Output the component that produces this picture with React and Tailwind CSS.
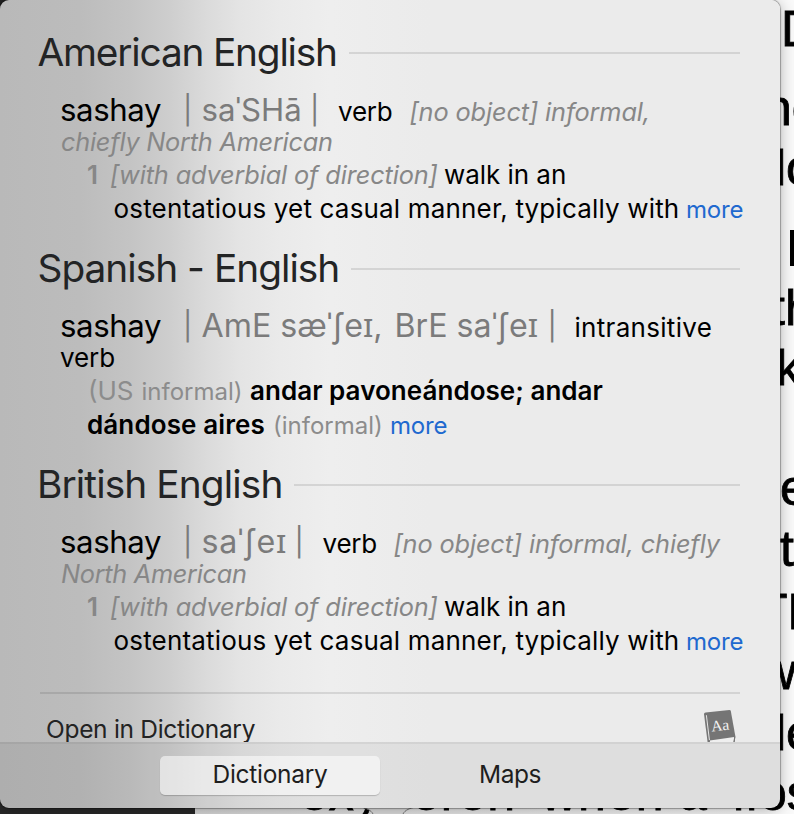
const ital = "shrink-0 whitespace-pre text-[25.3px] italic text-[#878787]";
const body = "shrink-0 whitespace-pre text-[26px] text-black";
const phon = "shrink-0 whitespace-pre text-[#7b7b7b]";
const bar = "shrink-0 relative bottom-px right-px whitespace-pre text-[28px] text-[#7b7b7b]";
const more = "shrink-0 whitespace-pre text-[24px] tracking-[-0.2px] text-[#1f69cf]";

function Heading({ width, children }) {
  return (
    <h2 className="flex h-[50px] items-center text-[38.8px] leading-[50px] text-[#232425]">
      <span className={`shrink-0 whitespace-pre ${width}`}>{children}</span>
      <span className="mt-[2px] mr-[40px] h-[2px] flex-1 bg-black/10" />
    </h2>
  );
}

function Line({ className, children }) {
  return <div className={`flex items-baseline ${className}`}>{children}</div>;
}

function Headword() {
  return (
    <>
      <span className="w-[124px] shrink-0 text-[31.2px] tracking-[-0.39px] text-black">sashay</span>
      <span className={`w-[17.5px] ${bar}`}>|</span>
    </>
  );
}

function Sense() {
  return (
    <>
      <Line className="h-[33px] pl-[87px] leading-[33px]">
        <span className="w-[23px] shrink-0 text-[26px] font-semibold text-[#878787]">1</span>
        <span className={`w-[334px] tracking-[-0.136px] ${ital}`}>[with adverbial of direction]</span>
        <span className={`tracking-[-0.05px] ${body}`}>walk in an</span>
      </Line>
      <Line className="h-[34px] pl-[113.5px] leading-[35px]">
        <span className={`w-[572.5px] tracking-[0.17px] ${body}`}>ostentatious yet casual manner, typically with</span>
        <a className={more}>more</a>
      </Line>
    </>
  );
}

/* Page text that shows past the popover's edges. */
const pageText = [
  ["D", "left-[781px] top-[4px]"],
  ["ne", "left-[764px] top-[83px]"],
  ["lo", "left-[775px] top-[143px]"],
  ["th", "left-[771px] top-[283px]"],
  ["k", "left-[776px] top-[343px]"],
  ["l", "left-[771.5px] top-[403px]"],
  ["e", "left-[780px] top-[463px]"],
  ["t", "left-[780px] top-[524px]"],
  ["TH", "left-[757px] top-[587px]"],
  ["w", "left-[760px] top-[647px]"],
  ["le", "left-[775px] top-[708px]"],
  ["exy", "left-[300px] top-[768px] tracking-[1px]"],
  ["eren", "left-[412px] top-[768px] tracking-[1px]"],
  ["when", "left-[541px] top-[768px] tracking-[1px]"],
  ["a", "left-[679px] top-[768px]"],
  ["fr", "left-[732px] top-[768px]"],
  ["os", "left-[759px] top-[768px]"],
];

function PageBehind() {
  return (
    <div className="absolute inset-0 overflow-hidden bg-[#fafafa]">
      <div className="absolute inset-x-0 bottom-0 h-[20px] bg-gradient-to-r from-[#d8d8d8] from-[25%] to-[#fafafa] to-[98%]" />
      <div className="absolute bottom-0 left-0 h-[20px] w-[195px] bg-[#282828]" />
      {pageText.map(([t, pos]) => (
        <span key={pos} className={`absolute font-['Liberation_Sans',sans-serif] text-[50px] leading-[50px] text-black [-webkit-text-stroke:0.8px_black] ${pos}`}>{t}</span>
      ))}
      <div className="absolute top-[230px] left-[790px] h-[36px] w-[6px] bg-black" />
      <div className="absolute top-0 left-0 h-[20px] w-[20px] bg-[#222]" />
      <svg className="absolute top-[806px] left-[360px] h-[8px] w-[56px]" viewBox="0 0 56 8" fill="none">
        <path d="M0 1C6 2 11 4 13 8H43C45 4 50 2 56 1V0H0Z" fill="#dddddd" />
        <path d="M0 1C6 2 11 4 13 8M43 8C45 4 50 2 56 1" stroke="#777" strokeWidth="1" />
      </svg>
    </div>
  );
}

function BookIcon() {
  return (
    <svg className="h-[33px] w-[34px]" viewBox="0 0 34 33" fill="none">
      <path d="M1 5.2Q1 3.8 2.6 3.6L26.4 1Q27.6 1 27.8 2L32.4 27.5L31.6 33H4.6Z" fill="#757575" />
      <path d="M3.4 6.2L6.4 31" stroke="#e6e6e6" strokeWidth="1" />
      <path d="M6.8 31.4L31.2 28L30.6 33H7Z" fill="#efefef" />
      <path d="M31.8 28L31 33" stroke="#757575" strokeWidth="1" />
      <text x="8.2" y="21.5" transform="rotate(-6 17 17)" fontFamily="Liberation Serif, serif" fontSize="15.5" fill="#f2f2f2">Aa</text>
    </svg>
  );
}

export default function App() {
  return (
    <div className="relative h-[814px] w-[794px] overflow-hidden font-['Inter','Noto_Sans',sans-serif]">
      <PageBehind />
      <main className="relative flex h-[808px] w-[780px] flex-col overflow-hidden rounded-[9px] bg-[linear-gradient(90deg,#b9b9b9_0px,#bcbcbc_80px,#c4c4c4_130px,#cecece_170px,#dadada_205px,#e4e4e4_240px,#eaeaea_280px,#eeeeee_330px,#ebebeb_430px,#ebebeb_780px)] shadow-[0_0_1px_1px_rgba(0,0,0,0.3),0_2px_16px_rgba(0,0,0,0.3)]">
        <div className="h-[742px] overflow-hidden pt-[27px]">
          <section className="h-[216px]">
            <Heading width="ml-[37.5px] w-[311.5px] tracking-[-1.19px]">American English</Heading>
            <Line className="mt-[16px] h-[33px] pl-[60px] leading-[34px]">
              <Headword />
              <span className={`w-[109.5px] text-[31.2px] ${phon}`}>saˈSHā</span>
              <span className={`w-[27px] ${bar}`}>|</span>
              <span className={`w-[71.5px] tracking-[-0.2px] ${body}`}>verb</span>
              <span className={`tracking-[-0.12px] ${ital}`}>[no object] informal,</span>
            </Line>
            <Line className="h-[32px] pl-[61px] leading-[32px]">
              <span className={`tracking-[-0.234px] ${ital}`}>chiefly North American</span>
            </Line>
            <Sense />
          </section>

          <section className="h-[216px]">
            <Heading width="ml-[37.5px] w-[313.5px] tracking-[-0.98px]">Spanish - English</Heading>
            <Line className="mt-[16px] h-[33px] pl-[60px] leading-[34px]">
              <Headword />
              <span className={`w-[193px] text-[32.2px] ${phon}`}>AmE sæˈʃeɪ,</span>
              <span className={`w-[154px] text-[32.2px] ${phon}`}>BrE saˈʃeɪ</span>
              <span className={`w-[26px] ${bar}`}>|</span>
              <span className={`tracking-[0.3px] ${body}`}>intransitive</span>
            </Line>
            <Line className="h-[32px] pl-[60px] leading-[32px]">
              <span className={`tracking-[-0.1px] ${body}`}>verb</span>
            </Line>
            <Line className="h-[33px] pl-[88px] leading-[33px]">
              <span className="w-[53.5px] shrink-0 text-[26px] text-[#8c8c8c]">(US</span>
              <span className="w-[108.5px] shrink-0 text-[24px] text-[#8c8c8c]">informal)</span>
              <span className="shrink-0 whitespace-pre text-[26px] font-semibold tracking-[0.04px] text-black">andar pavoneándose; andar</span>
            </Line>
            <Line className="h-[34px] pl-[87px] leading-[35px]">
              <span className="w-[186px] shrink-0 whitespace-pre text-[26px] font-semibold tracking-[0.11px] text-black">dándose aires</span>
              <span className="w-[117px] shrink-0 text-[24px] text-[#8c8c8c]">(informal)</span>
              <a className={more}>more</a>
            </Line>
          </section>

          <section className="h-[216px]">
            <Heading width="ml-[37px] w-[257px] tracking-[-0.88px]">British English</Heading>
            <Line className="mt-[16px] h-[33px] pl-[60px] leading-[34px]">
              <Headword />
              <span className={`w-[94px] text-[32.2px] tracking-[0.64px] ${phon}`}>saˈʃeɪ</span>
              <span className={`w-[27px] ${bar}`}>|</span>
              <span className={`w-[71px] tracking-[-0.2px] ${body}`}>verb</span>
              <span className={`tracking-[-0.13px] ${ital}`}>[no object] informal, chiefly</span>
            </Line>
            <Line className="h-[32px] pl-[61px] leading-[32px]">
              <span className={`tracking-[-0.291px] ${ital}`}>North American</span>
            </Line>
            <Sense />
          </section>

          <div className="mx-[40px] mt-[17px] h-[2px] bg-black/10" />
          <div className="flex items-start justify-between pr-[43px] pl-[46px]">
            <span className="mt-[15px] text-[24.5px] leading-[40px] tracking-[-0.3px] text-[#232323]">Open in Dictionary</span>
            <span className="mt-[15px]"><BookIcon /></span>
          </div>
        </div>

        <nav className="flex h-[66px] items-start gap-[20px] border-t-2 border-black/5 bg-black/[0.055] pt-[12px] pl-[160px] text-center text-[24.5px] leading-[37px] text-[#1e1e1e]">
          <button className="flex h-[39px] w-[220px] justify-center rounded-[5px] bg-white/55 tracking-[-0.29px] shadow-[0_1px_1px_rgba(0,0,0,0.2)]">Dictionary</button>
          <button className="flex h-[39px] w-[220px] justify-center tracking-[-0.46px]">Maps</button>
        </nav>
      </main>
    </div>
  );
}
